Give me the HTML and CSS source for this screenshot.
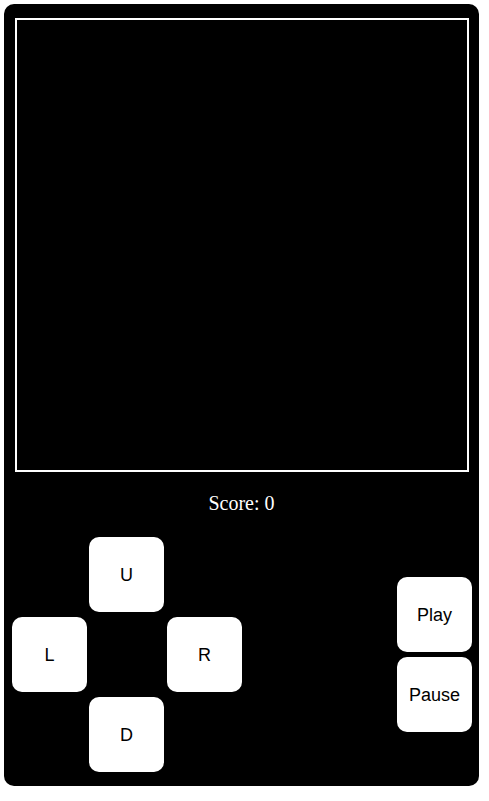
FILE: index.html
```html
<!DOCTYPE html>
<html>
<head>
<meta charset="utf-8">
<link rel="stylesheet" href="styles.css">
</head>
<body>
<div class="console">
  <div class="screen"></div>
  <div class="score">Score: 0</div>
  <div class="controls">
    <div class="dpad">
      <button class="btn up">U</button>
      <button class="btn left">L</button>
      <button class="btn right">R</button>
      <button class="btn down">D</button>
    </div>
    <div class="actions">
      <button class="btn">Play</button>
      <button class="btn">Pause</button>
    </div>
  </div>
</div>
</body>
</html>
```
FILE: styles.css
```css
html, body {
  margin: 0;
  padding: 0;
  background: #fff;
}
.console {
  margin: 4px 0 0 4px;
  width: 475px;
  height: 782px;
  box-sizing: border-box;
  background: #000;
  border-radius: 10px;
  padding: 14px 0 0 11px;
}
.screen {
  width: 450px;
  height: 450px;
  border: 2px solid #fff;
  background: #000;
}
.score {
  margin-top: 20px;
  margin-left: -11px;
  text-align: center;
  color: #fff;
  font-family: "Liberation Serif", "Times New Roman", serif;
  font-size: 20px;
  line-height: 23px;
}
.controls {
  margin-top: 22px;
  margin-left: -3px;
  width: 460px;
  display: flex;
  justify-content: space-between;
  align-items: center;
}
.dpad {
  display: grid;
  grid-template-columns: 77px 78px 75px;
  grid-template-rows: 75px 75px 75px;
  row-gap: 5px;
}
.btn {
  width: 75px;
  height: 75px;
  margin: 0;
  padding: 1px 0 0;
  border: none;
  border-radius: 10px;
  background: #fff;
  color: #000;
  font-family: "Liberation Sans", Arial, sans-serif;
  font-size: 18px;
}
.up { grid-column: 2; grid-row: 1; }
.left { grid-column: 1; grid-row: 2; }
.right { grid-column: 3; grid-row: 2; }
.down { grid-column: 2; grid-row: 3; }
.actions {
  display: flex;
  flex-direction: column;
  gap: 5px;
}
```
